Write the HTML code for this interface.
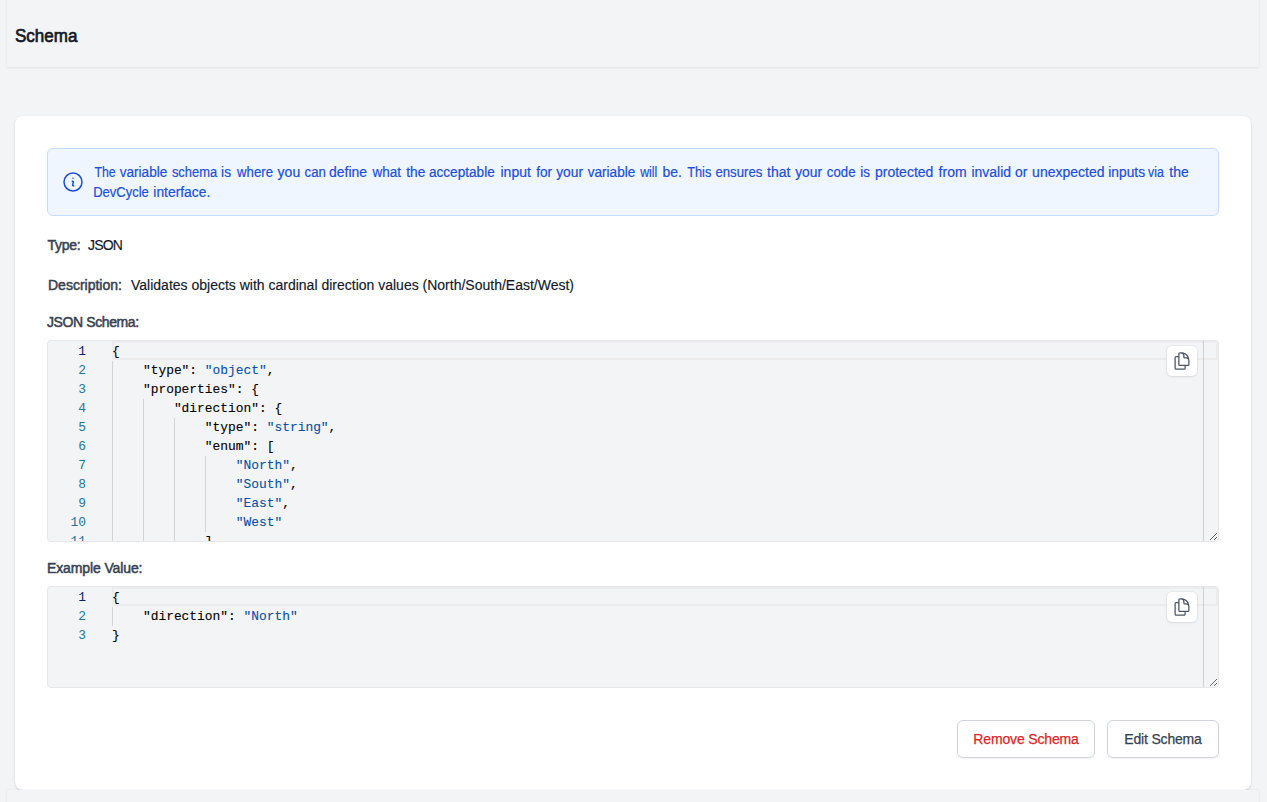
<!DOCTYPE html>
<html><head><meta charset="utf-8">
<style>
*{box-sizing:border-box;margin:0;padding:0}
html,body{width:1267px;height:802px;overflow:hidden;background:#f3f4f6;font-family:"Liberation Sans",sans-serif;color:#111827}
.abs{position:absolute}
#hdr{left:7px;top:-10px;width:1252px;height:77px;background:#f3f4f6;box-shadow:0 1px 2px rgba(0,0,0,.08)}
#title{left:15px;top:23.5px;font-size:19px;color:#111827;-webkit-text-stroke:.7px #111827;line-height:24px;transform-origin:0 0;transform:scaleX(.895);white-space:nowrap}
#hdr2{left:7px;top:790px;width:1252px;height:40px;background:#f3f4f6;box-shadow:0 0 2px rgba(0,0,0,.08)}
#card{left:15px;top:116px;width:1236px;height:674px;background:#fff;border-radius:8px;box-shadow:0 1px 3px rgba(0,0,0,.1),0 1px 2px rgba(0,0,0,.06)}
#info{left:47px;top:148px;width:1172px;height:68px;background:#eff6ff;border:1px solid #c6dbfd;border-radius:6px}
#infoicon{left:61px;top:170px;width:24px;height:24px}
#infotext{left:94px;top:162px;width:1110px;height:40px;font-size:14px;line-height:20px;color:#1d4ed8}#infotext span{position:absolute;white-space:nowrap;-webkit-text-stroke:.2px #1d4ed8}
.lbl{font-size:14px;color:#374151;-webkit-text-stroke:.5px #374151;line-height:20px;white-space:nowrap}
.val{font-size:14px;color:#111827;line-height:20px;white-space:nowrap;-webkit-text-stroke:.15px #111827}

.ed{position:absolute;left:47px;width:1172px;background:#f3f4f6;border:1px solid #e5e7eb;border-radius:4px;overflow:hidden;resize:vertical}
.ed .cur{position:absolute;left:64px;right:0;top:0;height:19px;border:2px solid #ececec}
.ed .ln{position:absolute;left:0;width:38px;text-align:right;font-family:"Liberation Mono",monospace;font-size:12.9px;line-height:19px;color:#237893;white-space:pre}
.ed .ln div,.ed .code div{height:19px;padding-top:1px}
.ed .ln div:first-child{color:#0b216f}
.ed .code{position:absolute;left:64px;top:0;font-family:"Liberation Mono",monospace;font-size:12.9px;line-height:19px;color:#000;white-space:pre;-webkit-text-stroke:.1px currentColor}
.ed .g{position:absolute;width:1px;background:#d3d3d3}
.ed .ruler{position:absolute;right:14px;top:0;bottom:0;width:1px;background:rgba(127,127,127,.3)}
.ed .s{color:#0451a5}
.cp{position:absolute;width:30px;height:30px;background:#fff;border-radius:5px;box-shadow:0 0 0 1px rgba(0,0,0,.035),0 1px 3px rgba(0,0,0,.08)}
.cp svg{position:absolute;left:5px;top:5px;width:20px;height:20px}

.btn{position:absolute;top:720px;height:38px;background:#fff;border:1px solid #d1d5db;border-radius:6px;box-shadow:0 1px 2px rgba(0,0,0,.05);font-size:14px;line-height:36px;text-align:center;white-space:nowrap;-webkit-text-stroke:.25px currentColor}
</style></head><body>
<div id="hdr" class="abs"></div>
<div id="title" class="abs">Schema</div>
<div id="card" class="abs"></div>
<div id="hdr2" class="abs"></div>
<div id="info" class="abs"></div>
<svg id="infoicon" class="abs" viewBox="0 0 24 24" fill="none" stroke="#1d4ed8" stroke-width="1.5" stroke-linecap="round" stroke-linejoin="round"><path d="m11.25 11.25.041-.02a.75.75 0 0 1 1.063.852l-.708 2.836a.75.75 0 0 0 1.063.853l.041-.021M21 12a9 9 0 1 1-18 0 9 9 0 0 1 18 0Zm-9-3.75h.008v.008H12V8.25Z"/></svg>
<div id="infotext" class="abs"><span style="left:-1.2px;top:0px;transform:scaleX(0.880)">The</span><span style="left:24.9px;top:0px;transform:scaleX(0.972)">variable</span><span style="left:75.8px;top:0px;transform:scaleX(0.923)">schema</span><span style="left:127.3px;top:0px;transform:scaleX(0.980)">is</span><span style="left:141.5px;top:0px;transform:scaleX(0.944)">where</span><span style="left:183.6px;top:0px;transform:scaleX(1.000)">you</span><span style="left:209.7px;top:0px;transform:scaleX(0.945)">can</span><span style="left:235.2px;top:0px;transform:scaleX(0.997)">define</span><span style="left:278.3px;top:0px;transform:scaleX(0.967)">what</span><span style="left:311.6px;top:0px;transform:scaleX(0.980)">the</span><span style="left:334.4px;top:0px;transform:scaleX(0.972)">acceptable</span><span style="left:406.5px;top:0px;transform:scaleX(1.000)">input</span><span style="left:441.8px;top:0px;transform:scaleX(0.976)">for</span><span style="left:462.4px;top:0px;transform:scaleX(0.986)">your</span><span style="left:493.4px;top:0px;transform:scaleX(0.972)">variable</span><span style="left:545.1px;top:0px;transform:scaleX(0.880)">will</span><span style="left:568.5px;top:0px;transform:scaleX(1.000)">be.</span><span style="left:591.9px;top:0px;transform:scaleX(0.913)">This</span><span style="left:620.1px;top:0px;transform:scaleX(0.944)">ensures</span><span style="left:673.1px;top:0px;transform:scaleX(1.000)">that</span><span style="left:701.1px;top:0px;transform:scaleX(0.989)">your</span><span style="left:732.0px;top:0px;transform:scaleX(0.944)">code</span><span style="left:765.8px;top:0px;transform:scaleX(0.960)">is</span><span style="left:781.0px;top:0px;transform:scaleX(1.000)">protected</span><span style="left:844.6px;top:0px;transform:scaleX(1.000)">from</span><span style="left:877.4px;top:0px;transform:scaleX(1.000)">invalid</span><span style="left:921.1px;top:0px;transform:scaleX(0.992)">or</span><span style="left:938.1px;top:0px;transform:scaleX(1.000)">unexpected</span><span style="left:1013.8px;top:0px;transform:scaleX(0.984)">inputs</span><span style="left:1053.4px;top:0px;transform:scaleX(0.880)">via</span><span style="left:1075.3px;top:0px;transform:scaleX(1.000)">the</span><span style="left:-2.6px;top:20px;transform:scaleX(0.929)">DevCycle</span><span style="left:59.4px;top:20px;transform:scaleX(0.988)">interface.</span></div>
<div class="abs lbl" style="left:47.5px;top:235px;letter-spacing:-.3px">Type:</div>
<div class="abs val" style="left:88px;top:235px;letter-spacing:-.8px">JSON</div>
<div class="abs lbl" style="left:48px;top:275px">Description:</div>
<div class="abs val" style="left:131px;top:275px">Validates objects with cardinal direction values (North/South/East/West)</div>
<div class="abs lbl" style="left:47px;top:312px;letter-spacing:-.4px">JSON Schema:</div>
<div class="abs lbl" style="left:47px;top:558px;letter-spacing:-.12px">Example Value:</div>
<div class="ed" style="top:340px;height:202px">
<div class="cur"></div><div class="g" style="left:64px;top:20px;height:228px"></div><div class="g" style="left:95px;top:58px;height:171px"></div><div class="g" style="left:126px;top:77px;height:133px"></div><div class="g" style="left:157px;top:115px;height:76px"></div>
<div class="ln"><div>1</div><div>2</div><div>3</div><div>4</div><div>5</div><div>6</div><div>7</div><div>8</div><div>9</div><div>10</div><div>11</div><div>12</div><div>13</div><div>14</div></div>
<div class="code"><div>{</div><div>    "type": <span class="s">"object"</span>,</div><div>    "properties": {</div><div>        "direction": {</div><div>            "type": <span class="s">"string"</span>,</div><div>            "enum": [</div><div>                <span class="s">"North"</span>,</div><div>                <span class="s">"South"</span>,</div><div>                <span class="s">"East"</span>,</div><div>                <span class="s">"West"</span></div><div>            ]</div><div>        }</div><div>    }</div><div>}</div></div>
<div class="ruler"></div>
</div><div class="cp" style="left:1167px;top:346px"><svg viewBox="0 0 24 24" fill="none" stroke="#4b5563" stroke-width="1.5" stroke-linecap="round" stroke-linejoin="round"><path d="M15.75 17.25v3.375c0 .621-.504 1.125-1.125 1.125h-9.75a1.125 1.125 0 0 1-1.125-1.125V7.875c0-.621.504-1.125 1.125-1.125H6.75a9.06 9.06 0 0 1 1.5.124m7.5 10.376h3.375c.621 0 1.125-.504 1.125-1.125V11.25c0-4.46-3.243-8.161-7.5-8.876a9.06 9.06 0 0 0-1.5-.124H9.375c-.621 0-1.125.504-1.125 1.125v3.5m7.5 10.375H9.375a1.125 1.125 0 0 1-1.125-1.125v-9.25m12 6.625v-1.875a3.375 3.375 0 0 0-3.375-3.375h-1.5a1.125 1.125 0 0 1-1.125-1.125v-1.5a3.375 3.375 0 0 0-3.375-3.375H9.75"/></svg></div><div class="ed" style="top:586px;height:102px">
<div class="cur"></div><div class="g" style="left:64px;top:20px;height:19px"></div>
<div class="ln"><div>1</div><div>2</div><div>3</div></div>
<div class="code"><div>{</div><div>    "direction": <span class="s">"North"</span></div><div>}</div></div>
<div class="ruler"></div>
</div><div class="cp" style="left:1167px;top:592px"><svg viewBox="0 0 24 24" fill="none" stroke="#4b5563" stroke-width="1.5" stroke-linecap="round" stroke-linejoin="round"><path d="M15.75 17.25v3.375c0 .621-.504 1.125-1.125 1.125h-9.75a1.125 1.125 0 0 1-1.125-1.125V7.875c0-.621.504-1.125 1.125-1.125H6.75a9.06 9.06 0 0 1 1.5.124m7.5 10.376h3.375c.621 0 1.125-.504 1.125-1.125V11.25c0-4.46-3.243-8.161-7.5-8.876a9.06 9.06 0 0 0-1.5-.124H9.375c-.621 0-1.125.504-1.125 1.125v3.5m7.5 10.375H9.375a1.125 1.125 0 0 1-1.125-1.125v-9.25m12 6.625v-1.875a3.375 3.375 0 0 0-3.375-3.375h-1.5a1.125 1.125 0 0 1-1.125-1.125v-1.5a3.375 3.375 0 0 0-3.375-3.375H9.75"/></svg></div>
<div class="btn" style="left:957px;width:138px;color:#dc2626;letter-spacing:-.15px">Remove Schema</div><div class="btn" style="left:1107px;width:112px;color:#374151;letter-spacing:-.18px">Edit Schema</div>
</body></html>
